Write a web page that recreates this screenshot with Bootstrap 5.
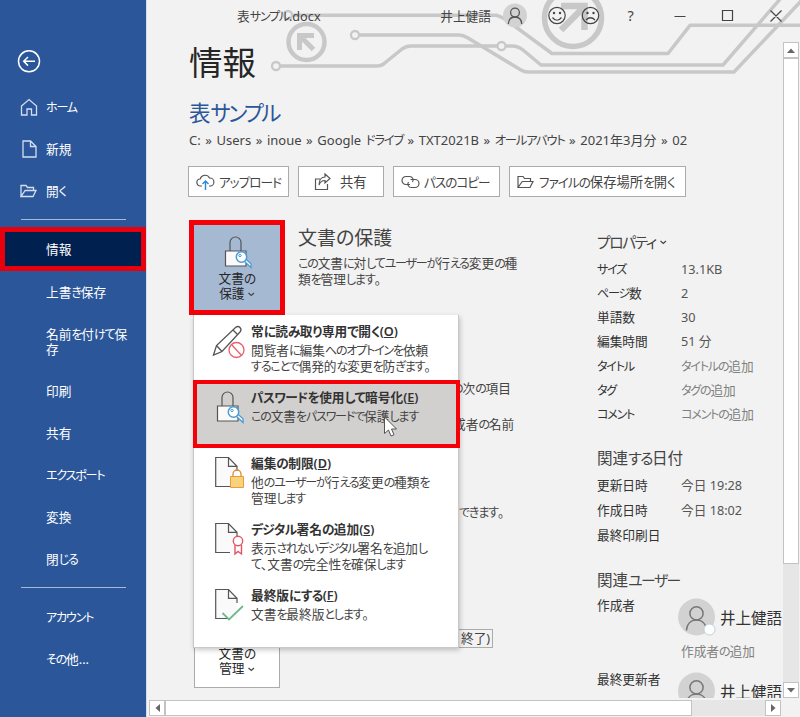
<!DOCTYPE html>
<html lang="ja">
<head>
<meta charset="utf-8">
<meta name="viewport" content="width=device-width, initial-scale=1">
<title>表サンプル.docx</title>
<link href="https://cdn.jsdelivr.net/npm/bootstrap@5.3.0/dist/css/bootstrap.min.css" rel="stylesheet">
<style>
body{width:800px;height:717px;background:#f2f2f2;color:#444;font-family:"Noto Sans","Noto Sans CJK JP",sans-serif;font-size:12.7px;line-height:16px;font-feature-settings:"palt";overflow:hidden}
svg{display:block;flex:none;fill:none}
/* condensed kana, as in UI faces for Japanese */
.kn{font-size:.95em;letter-spacing:-.1em;line-height:1}
b .kn{font-size:1em;letter-spacing:-.05em}
h3 .kn{font-size:1em;letter-spacing:0}
.side{width:147px;background:#2b579a;border-right:1px solid #d3dded;color:#fff;padding-top:86px;position:relative}
.side .item{height:42px;display:flex;align-items:center;color:#fff;text-decoration:none;padding-left:46px;padding-right:14px}
.side .item.ic{padding-left:20px;gap:8px}
.side .item.tall{height:57px;line-height:15px}
.side .item.on{height:44px;background:#002050;border:5px solid #e8000d;margin-top:-1px;padding-left:41px}
.side .rule{height:16px;padding:7px 20px 0 21px}
.side .rule div{height:1px;background:#a4b7d5}
.back{position:absolute;left:17px;top:49px}
.pane{width:653px;height:717px}
.circuit{position:absolute;left:0;top:0}
.bar{height:32px;padding-left:90px}
.user{margin-right:11px}
h1{font-size:33.5px;line-height:40px;font-weight:400;color:#262626;margin:10px 0 0}
h2{font-size:21.5px;line-height:28px;font-weight:400;color:#2b579a;margin:17px 0 0}
h2 .kn{letter-spacing:-.12em;font-size:1em}
.path{margin-top:5px;font-size:13px;word-spacing:1.2px}
.view{padding-left:42px}
.acts{margin-top:18px;margin-left:-1px;gap:9px}
.act{height:31px;border:1px solid #ababab;background:#fff;display:flex;align-items:center;font-size:13.3px;padding:0 0 0 7px;white-space:nowrap}
.act .kn{letter-spacing:-.08em}
.a1{width:101px}.a2{width:86px;padding-left:15px}.a3{width:107px}.a4{width:177px}
.cols{margin-top:23px}
.left{width:408px;flex:none}
.tile{width:96px;height:95px;border:5px solid #f50008;background:#a6b9d3;color:#262626;line-height:15px}
.mtile{width:86px;height:58px;border:1px solid #ababab;background:#fff;color:#262626;line-height:15px}
.lbl{text-align:center}
.lbl .kn{font-size:1em;letter-spacing:-.05em}
.protxt{padding:6px 0 0 13px}
.protxt div{padding-top:5px}
h3{font-size:19px;line-height:24px;font-weight:400;margin:0}
h4{font-size:15.6px;line-height:20px;font-weight:400;margin:0}
.b1{margin:65px 0 0 263px}.b2{margin:20px 0 0 264px}.b3{margin:72px 0 0 270px}
.b4{width:42px;height:19px;border:1px solid #ababab;margin:109px 0 0 262px;padding-left:9px}
.b5{margin:-18px 0 0 5px;padding-top:15px}
.prot{position:absolute;left:46px;top:315px;width:266px;height:333px;background:#fff;border:1px solid #c8c8c8;border-top:0;box-shadow:1px 2px 5px rgba(0,0,0,.22);z-index:2}
.opt{height:66px;padding:8px 8px 0 57px;position:relative;white-space:nowrap}
.opt b{font-weight:600;color:#333;display:block;line-height:17px;margin-bottom:2px}
.opt p{margin:0}
.opt svg{position:absolute;left:17px;top:9px}
.opt.hot{height:68px;background:#d2d0ce;border:4px solid #f50008;margin:-1px -2px -1px -1px;padding:5px 4px 0 54px}
.opt.hot svg{left:14px;top:6px}
.props{width:187px;padding-top:12px}
.props .r{display:flex;height:24.15px;align-items:center}
.props .d .r{height:25px}
.props .k{width:84px;flex:none;color:#333}
.props .v{color:#555}
.props .g{color:#808080}
.who{font-size:15.5px;color:#333}
.p1{margin-top:5px}.h4b{margin-top:22px}.d{margin-top:5px}.h4c{margin-top:22px}
.person{height:38px;margin-top:8px}.person .k{width:81px;margin-top:-1px}.person .who{margin:12px 0 0 4px}
.addw{padding-left:84px;margin-top:3px}.person.two{margin-top:9px;height:26px;overflow:hidden}
.vbar{width:16px;height:656px;background:#e6e6e6}
.hbar{height:16px;width:632px;background:#e6e6e6}
.sb{width:16px;height:16px;border:1px solid #c3c3c3;background:#fff;display:flex;align-items:center;justify-content:center;flex:none}
.vth{width:16px;height:506px;border:1px solid #c3c3c3;background:#fff}
.hth{height:16px;width:527px;border:1px solid #c3c3c3;background:#fff}
.vwrap{position:absolute;left:636px;top:42px}
.hwrap{position:absolute;left:2px;top:700px}
.cur{position:absolute;left:236px;top:416px;z-index:3}
</style>
</head>
<body class="d-flex m-0">
<svg width="0" height="0" class="position-absolute"><defs>
<g id="person"><circle cx="12" cy="8.6" r="4.4"/><path d="M5.3 20c.3-4.500 3-7 6.700-7s6.400 2.500 6.700 7"/></g>
<g id="lock"><path d="M7 14V5.500a5.500 5.500 0 0 1 11 0V14" stroke="#555" stroke-width="1.200"/><path d="M2.500 14h20.500v15h-20.500z" fill="#fafafa" stroke="#555" stroke-width="1.200"/><path d="M21 24l7 6.500v-3.800l-5-4.500" fill="#fff" stroke="#4a9ad6" stroke-width="1.300"/><circle cx="18.500" cy="20" r="5.200" fill="#fff" stroke="#4a9ad6" stroke-width="1.500"/><circle cx="17" cy="18.500" r="1.200" stroke="#4a9ad6"/></g>
<g id="page"><path d="M13.500 1.500H.700v29H22V10.300z" fill="#fafafa"/><path d="M15 30.500H.700V1.500h12.800L22 10.300V15M13.500 1.500v8.800H22" stroke="#555" stroke-width="1.200"/></g>
<path id="chev" d="M.5 1l2.800 2.500L6 1" stroke="#444" stroke-width="1.200"/>
<path id="folder" d="M1 12.500V1.500h5l1.500 2h6v3M1 12.500h12l3-6H5.200z"/>
</defs></svg>

<nav class="side flex-shrink-0">
  <svg class="back" width="24" height="24" stroke="#fff" stroke-width="1.500"><circle cx="12" cy="12.300" r="10.500"/><path d="M18 12.300H7M11 8l-4.300 4.300L11 16.600"/></svg>
  <a class="item ic"><svg width="18" height="18" stroke="#d5def0" stroke-width="1.300"><path d="M1.500 17V8L9 1.500 16.500 8v9h-5v-6h-4.500v6z"/></svg><span>ホーム</span></a>
  <a class="item ic"><svg width="18" height="18" stroke="#d5def0" stroke-width="1.300"><path d="M3 1h7.500L16 6.500V17H3zM10.500 1v5.500H16"/></svg><span>新規</span></a>
  <a class="item ic"><svg width="18" height="14" stroke="#d5def0" stroke-width="1.300"><use href="#folder"/></svg><span>開く</span></a>
  <div class="rule"><div></div></div>
  <a class="item on"><span>情報</span></a>
  <a class="item"><span>上書き保存</span></a>
  <a class="item tall"><span>名前を付けて保存</span></a>
  <a class="item"><span>印刷</span></a>
  <a class="item"><span>共有</span></a>
  <a class="item"><span>エクスポート</span></a>
  <a class="item"><span>変換</span></a>
  <a class="item"><span>閉じる</span></a>
  <div class="rule"><div></div></div>
  <a class="item"><span>アカウント</span></a>
  <a class="item"><span>その他...</span></a>
</nav>

<main class="pane position-relative">
  <svg class="circuit" width="653" height="100" viewBox="147 0 653 100" stroke="#c8c8c8" stroke-width="3.500" stroke-linejoin="round">
    <path d="M292 15.300H496Q501 16 509 22L552 53.500H668L690 25.300H800"/>
    <path d="M359 35H459Q463 35 468 38L521 70Q524 72 528 72H734L802 0"/>
    <path d="M280 66H377Q382 66 386 62L402 49Q406 46 411 46H497M506 46H512Q518 46 523 50L541 65H723L781-2"/>
    <g stroke-width="2.300"><circle cx="288" cy="15" r="4"/><circle cx="355" cy="35" r="4"/><circle cx="276" cy="66" r="4"/><circle cx="501.500" cy="46" r="4"/></g>
    <circle cx="306.500" cy="42" r="18" stroke-width="4.500"/>
    <path d="M299.500 50V35.500H314M301 37L313.500 49.500" stroke-width="5" stroke-linejoin="miter"/>
    <circle cx="573" cy="18" r="28.500" stroke-width="5.500"/>
    <path d="M561 6h23.500v24M583 8L561 30" stroke-width="6.500" stroke-linejoin="miter"/>
  </svg>

  <header class="bar d-flex align-items-center position-relative">
    <span>表サンプル.docx</span>
    <span class="ms-auto user">井上健語</span>
    <svg width="26" height="26" viewBox="0 0 26 26"><circle cx="13" cy="12.500" r="12" fill="#d2d2d2"/><g transform="translate(1 1)" stroke="#555" stroke-width="1.300"><use href="#person"/></g></svg>
    <svg class="ms-3" width="256" height="26" viewBox="544 3 256 26" stroke="#444" stroke-width="1.200">
      <circle cx="557" cy="15.500" r="8.200"/><circle cx="590.500" cy="15.500" r="8.200"/>
      <path d="M552.500 17.500q4.500 5.500 9 0M586 20q4.500-4.500 9 0"/>
      <g fill="#444" stroke="none"><circle cx="554" cy="13" r="1.200"/><circle cx="560" cy="13" r="1.200"/><circle cx="587.500" cy="13" r="1.200"/><circle cx="593.500" cy="13" r="1.200"/></g>
      <text x="627.500" y="21" font-size="14.500" fill="#444" stroke="none">?</text>
      <path d="M674.500 16.500h11M722.500 10.500h10v10h-10zM770.500 10.500l11 11M781.500 10.500l-11 11"/>
    </svg>
  </header>

  <div class="view position-relative">
    <h1>情報</h1>
    <h2>表サンプル</h2>
    <div class="path text-nowrap">C: » Users » inoue » Google ドライブ » TXT2021B » オールアバウト » 2021年3月分 » 02</div>
    <div class="acts d-flex">
      <div class="act a1"><svg width="19" height="18" stroke="#555" stroke-width="1.200"><path d="M6 13H4.500a3.500 3.500 0 0 1-.3-7A5 5 0 0 1 13.500 5a4 4 0 0 1 .8 8H13"/><path d="M9.500 17V8M6.500 11l3-3 3 3" stroke="#2b88d8" stroke-width="1.400"/></svg><span class="ms-1">アップロード</span></div>
      <div class="act a2"><svg width="18" height="18" stroke="#555" stroke-width="1.200"><path d="M6 6H1.500v10.500h12V11M11 1l5 4.500-5 4.500V7.500C8 7.500 6 9 5 12c0-5 2.500-8 6-8z"/></svg><span class="ms-2">共有</span></div>
      <div class="act a3"><svg width="19" height="14" stroke="#555" stroke-width="1.200"><path d="M9 9.500H5a4 4 0 0 1 0-8h3.500a3.500 3.500 0 0 1 3 5.500M9.500 4.500H14a4 4 0 0 1 0 8h-3.500A3.500 3.500 0 0 1 7.500 7"/></svg><span class="ms-1">パスのコピー</span></div>
      <div class="act a4"><svg width="18" height="14" stroke="#555" stroke-width="1.200"><use href="#folder"/></svg><span class="ms-1">ファイルの保存場所を開く</span></div>
    </div>
    <div class="cols d-flex">
      <section class="left">
        <div class="d-flex">
          <div class="tile flex-shrink-0 d-flex flex-column align-items-center">
            <svg class="mt-2" width="29" height="38" viewBox="0 -4 29 38"><use href="#lock"/></svg>
            <div class="lbl">文書の<br>保護 <svg class="d-inline-block" width="7" height="8" viewBox="0 -1 7 8"><use href="#chev"/></svg></div>
          </div>
          <div class="protxt"><h3>文書の保護</h3><div class="text-nowrap">この文書に対してユーザーが行える変更の種<br>類を管理します。</div></div>
        </div>
        <div class="b1">の次の項目</div>
        <div class="b2">成者の名前</div>
        <div class="b3">できます。</div>
        <div class="b4">終了)</div>
        <div class="mtile b5"><div class="lbl">文書の<br>管理 <svg class="d-inline-block" width="7" height="8" viewBox="0 -1 7 8"><use href="#chev"/></svg></div></div>
      </section>
      <section class="props text-nowrap">
        <h4>プロパティ <svg class="d-inline-block" width="7" height="9" viewBox="0 -1 7 9"><use href="#chev"/></svg></h4>
        <div class="p1">
          <div class="r"><span class="k">サイズ</span><span class="v">13.1KB</span></div>
          <div class="r"><span class="k">ページ数</span><span class="v">2</span></div>
          <div class="r"><span class="k">単語数</span><span class="v">30</span></div>
          <div class="r"><span class="k">編集時間</span><span class="v">51 分</span></div>
          <div class="r"><span class="k">タイトル</span><span class="g">タイトルの追加</span></div>
          <div class="r"><span class="k">タグ</span><span class="g">タグの追加</span></div>
          <div class="r"><span class="k">コメント</span><span class="g">コメントの追加</span></div>
        </div>
        <h4 class="h4b">関連する日付</h4>
        <div class="d">
          <div class="r"><span class="k">更新日時</span><span class="v">今日 19:28</span></div>
          <div class="r"><span class="k">作成日時</span><span class="v">今日 18:02</span></div>
          <div class="r"><span class="k">最終印刷日</span></div>
        </div>
        <h4 class="h4c">関連ユーザー</h4>
        <div class="person d-flex"><span class="k">作成者</span><svg width="38" height="38" viewBox="0 0 38 38"><circle cx="18.500" cy="19" r="18.500" fill="#d2d2d2"/><g transform="translate(.5 2.500) scale(1.500)" stroke="#777" stroke-width="1"><use href="#person"/></g><circle cx="31.500" cy="31.500" r="5.500" fill="#fff" stroke="#b9d2dc"/></svg><span class="who">井上健語</span></div>
        <div class="r addw"><span class="g">作成者の追加</span></div>
        <div class="person two d-flex"><span class="k">最終更新者</span><svg width="38" height="38" viewBox="0 0 38 38"><circle cx="18.500" cy="19" r="18.500" fill="#d2d2d2"/><g transform="translate(.5 2.500) scale(1.500)" stroke="#777" stroke-width="1"><use href="#person"/></g><circle cx="31.500" cy="31.500" r="5.500" fill="#fff" stroke="#b9d2dc"/></svg><span class="who">井上健語</span></div>
      </section>
    </div>
  </div>

  <div class="prot">
    <div class="opt"><svg width="34" height="36" stroke="#555" stroke-width="1.300"><path d="M2.500 31l3-9.500L24.500 3.500q2.500-2 4.500 0t0 4.500L11 27.500zM5.500 21.500l5.500 6M22 6l5 5"/><circle cx="25.500" cy="26" r="7.500" fill="#fff" stroke="#e8606a"/><path d="M20.500 20.500L30.500 31.500" stroke="#e8606a"/></svg><b>常に読み取り専用で開く(<u>O</u>)</b><p>閲覧者に編集へのオプトインを依頼<br>することで偶発的な変更を防ぎます。</p></div>
    <div class="opt hot"><svg width="34" height="36" viewBox="-4 -2 34 36"><use href="#lock"/></svg><b>パスワードを使用して暗号化(<u>E</u>)</b><p>この文書をパスワードで保護します</p></div>
    <div class="opt"><svg width="34" height="36" viewBox="-4 0 34 36"><use href="#page"/><path d="M15.500 20.500h13V31.500h-13z" fill="#fbd27c" stroke="#e89b3f"/><path d="M18 20.500v-2.500a4 4 0 0 1 8 0v2.500" stroke="#e08a3a" stroke-width="1.300"/></svg><b>編集の制限(<u>D</u>)</b><p>他のユーザーが行える変更の種類を<br>管理します</p></div>
    <div class="opt"><svg width="34" height="36" viewBox="-4 0 34 36"><use href="#page"/><g stroke="#e25563" stroke-width="1.400"><path d="M20 23v9l3-2.500 3.500 2.500v-9" fill="#fff"/><circle cx="23" cy="19" r="4.700" fill="#fff"/></g></svg><b>デジタル署名の追加(<u>S</u>)</b><p>表示されないデジタル署名を追加し<br>て、文書の完全性を確保します</p></div>
    <div class="opt"><svg width="34" height="36" viewBox="-4 0 34 36"><use href="#page"/><path d="M7.500 25l6.500 6.500L28 18" stroke="#6fb98a" stroke-width="1.800"/></svg><b>最終版にする(<u>F</u>)</b><p>文書を最終版とします。</p></div>
  </div>
  <svg class="cur" width="15" height="22"><path d="M1.500 1v16.500l4-3.500 2.500 6 3-1.200-2.500-5.800h5z" fill="#fff" stroke="#555"/></svg>

  <div class="vwrap"><div class="vbar d-flex flex-column"><div class="sb"><svg width="8" height="5"><path d="M0 5l4-4.500L8 5z" fill="#666"/></svg></div><div class="vth"></div><div class="sb mt-auto"><svg width="8" height="5"><path d="M0 0l4 4.500L8 0z" fill="#666"/></svg></div></div></div>
  <div class="hwrap"><div class="hbar d-flex"><div class="sb"><svg width="5" height="8"><path d="M5 0L.5 4 5 8z" fill="#666"/></svg></div><div class="hth"></div><div class="sb ms-auto"><svg width="5" height="8"><path d="M0 0l4.500 4L0 8z" fill="#666"/></svg></div></div></div>
</main>
<script src="https://cdn.jsdelivr.net/npm/bootstrap@5.3.0/dist/js/bootstrap.bundle.min.js"></script>
<script>
// Wrap each run of kana so that it can be set narrower than the kanji.
const walker = document.createTreeWalker(document.body, NodeFilter.SHOW_TEXT);
const nodes = [];
while (walker.nextNode()) if (!walker.currentNode.parentElement.closest('script,svg')) nodes.push(walker.currentNode);
for (const n of nodes) {
  if (!/[\u3040-\u30ff]/.test(n.data)) continue;
  const f = document.createDocumentFragment();
  for (const part of n.data.split(/([\u3040-\u30ff]+)/)) {
    if (!part) continue;
    if (/^[\u3040-\u30ff]/.test(part)) {
      const s = document.createElement('span');
      s.className = 'kn';
      s.textContent = part;
      f.append(s);
    } else f.append(part);
  }
  n.replaceWith(f);
}
</script>
</body>
</html>
